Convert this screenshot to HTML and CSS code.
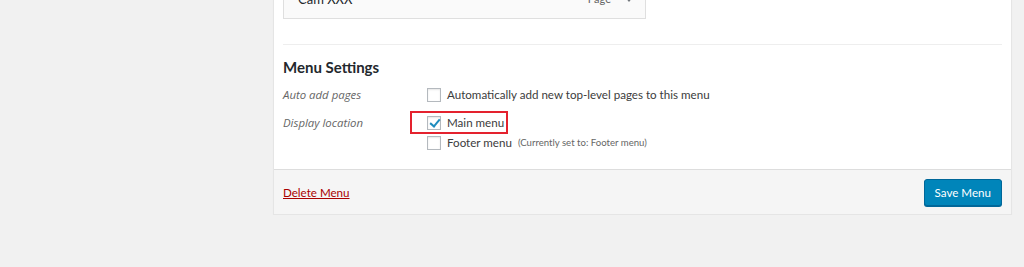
FILE: index.html
```html
<!DOCTYPE html>
<html lang="en">
<head>
  <meta charset="UTF-8">
  <title>Menus</title>
  <link rel="stylesheet" href="styles.css">
</head>
<body>
  <div class="menu-panel">
    <div class="menu-body">
      <ul class="menu-items">
        <li class="menu-item">
          <span class="item-title">Cam XXX</span>
          <span class="item-controls"><span class="item-type">Page</span><span class="item-arrow"></span></span>
        </li>
      </ul>
      <div class="menu-settings">
        <h3>Menu Settings</h3>
        <div class="setting-row">
          <div class="setting-name">Auto add pages</div>
          <div class="setting-input">
            <label class="check"><span class="box"></span>Automatically add new top-level pages to this menu</label>
          </div>
        </div>
        <div class="setting-row">
          <div class="setting-name">Display location</div>
          <div class="setting-input">
            <label class="check highlight"><span class="box checked"></span>Main menu</label>
            <label class="check"><span class="box"></span>Footer menu <span class="note">(Currently set to: Footer menu)</span></label>
          </div>
        </div>
      </div>
    </div>
    <div class="menu-footer">
      <a href="#" class="delete">Delete Menu</a>
      <button class="save">Save Menu</button>
    </div>
  </div>
</body>
</html>
```

FILE: styles.css
```css
body {
  margin: 0;
  background: #f1f1f1;
  font-family: Lato, "Open Sans", sans-serif;
  font-size: 11.6px;
  color: #3c3c3c;
  overflow: hidden;
}
.menu-panel {
  width: 739px;
  margin: -23px 0 0 273px;
  box-sizing: border-box;
  background: #fff;
  border: 1px solid #e5e5e5;
  box-shadow: 0 1px 1px rgba(0, 0, 0, 0.04);
}
.menu-body {
  padding: 0 9px 16px;
}
.menu-items {
  list-style: none;
  margin: 0;
  padding: 0;
}
.menu-item {
  width: 363px;
  box-sizing: border-box;
  display: flex;
  justify-content: space-between;
  align-items: center;
  padding: 10px 12px 9px 14px;
  line-height: 20px;
  background: #fafafa;
  border: 1px solid #dfdfdf;
}
.item-title {
  font-size: 13px;
  color: #23282d;
}
.item-controls {
  display: flex;
  align-items: center;
  gap: 14px;
  color: #666;
  font-size: 11px;
}
.item-arrow {
  width: 0;
  height: 0;
  border-left: 4px solid transparent;
  border-right: 4px solid transparent;
  border-top: 5px solid #72777c;
}
.menu-settings {
  margin-top: 25px;
  border-top: 1px solid #eee;
  padding-top: 12px;
}
.menu-settings h3 {
  margin: 0 0 8px;
  font-size: 15px;
  line-height: 20px;
  font-weight: 700;
  color: #23282d;
}
.setting-row {
  display: flex;
  margin-bottom: 8px;
}
.setting-row:last-child {
  margin-bottom: 0;
}
.setting-name {
  width: 144px;
  line-height: 20px;
  font-family: "Open Sans", sans-serif;
  font-size: 11.4px;
  font-style: italic;
  color: #666;
}
.setting-input {
  display: flex;
  flex-direction: column;
  align-items: flex-start;
}
.check {
  display: flex;
  align-items: center;
  line-height: 20px;
  gap: 6px;
}
.box {
  width: 14px;
  height: 14px;
  box-sizing: border-box;
  border: 1px solid #b4b9be;
  background: #fff;
  box-shadow: inset 0 1px 2px rgba(0, 0, 0, 0.1);
  position: relative;
}
.box.checked::before {
  content: "";
  position: absolute;
  left: 4px;
  top: 0;
  width: 4px;
  height: 8px;
  border: solid #1e8cbe;
  border-width: 0 2px 2px 0;
  transform: rotate(40deg);
}
.note {
  font-size: 9.6px;
  color: #666;
}
.highlight {
  position: relative;
}
.highlight::after {
  content: "";
  position: absolute;
  left: -17px;
  right: -4px;
  top: -2px;
  bottom: -1px;
  border: 2px solid #e4222e;
}
.menu-footer {
  display: flex;
  justify-content: space-between;
  align-items: center;
  padding: 9px 9px 8px;
  background: #f5f5f5;
  border-top: 1px solid #ddd;
}
.delete {
  color: #a00;
  line-height: 20px;
}
.save {
  height: 27px;
  padding: 0 10px;
  font-family: inherit;
  font-size: 11.6px;
  color: #fff;
  background: #0085ba;
  border: 1px solid #006799;
  border-radius: 3px;
  box-shadow: 0 1px 0 #006799;
}
```
